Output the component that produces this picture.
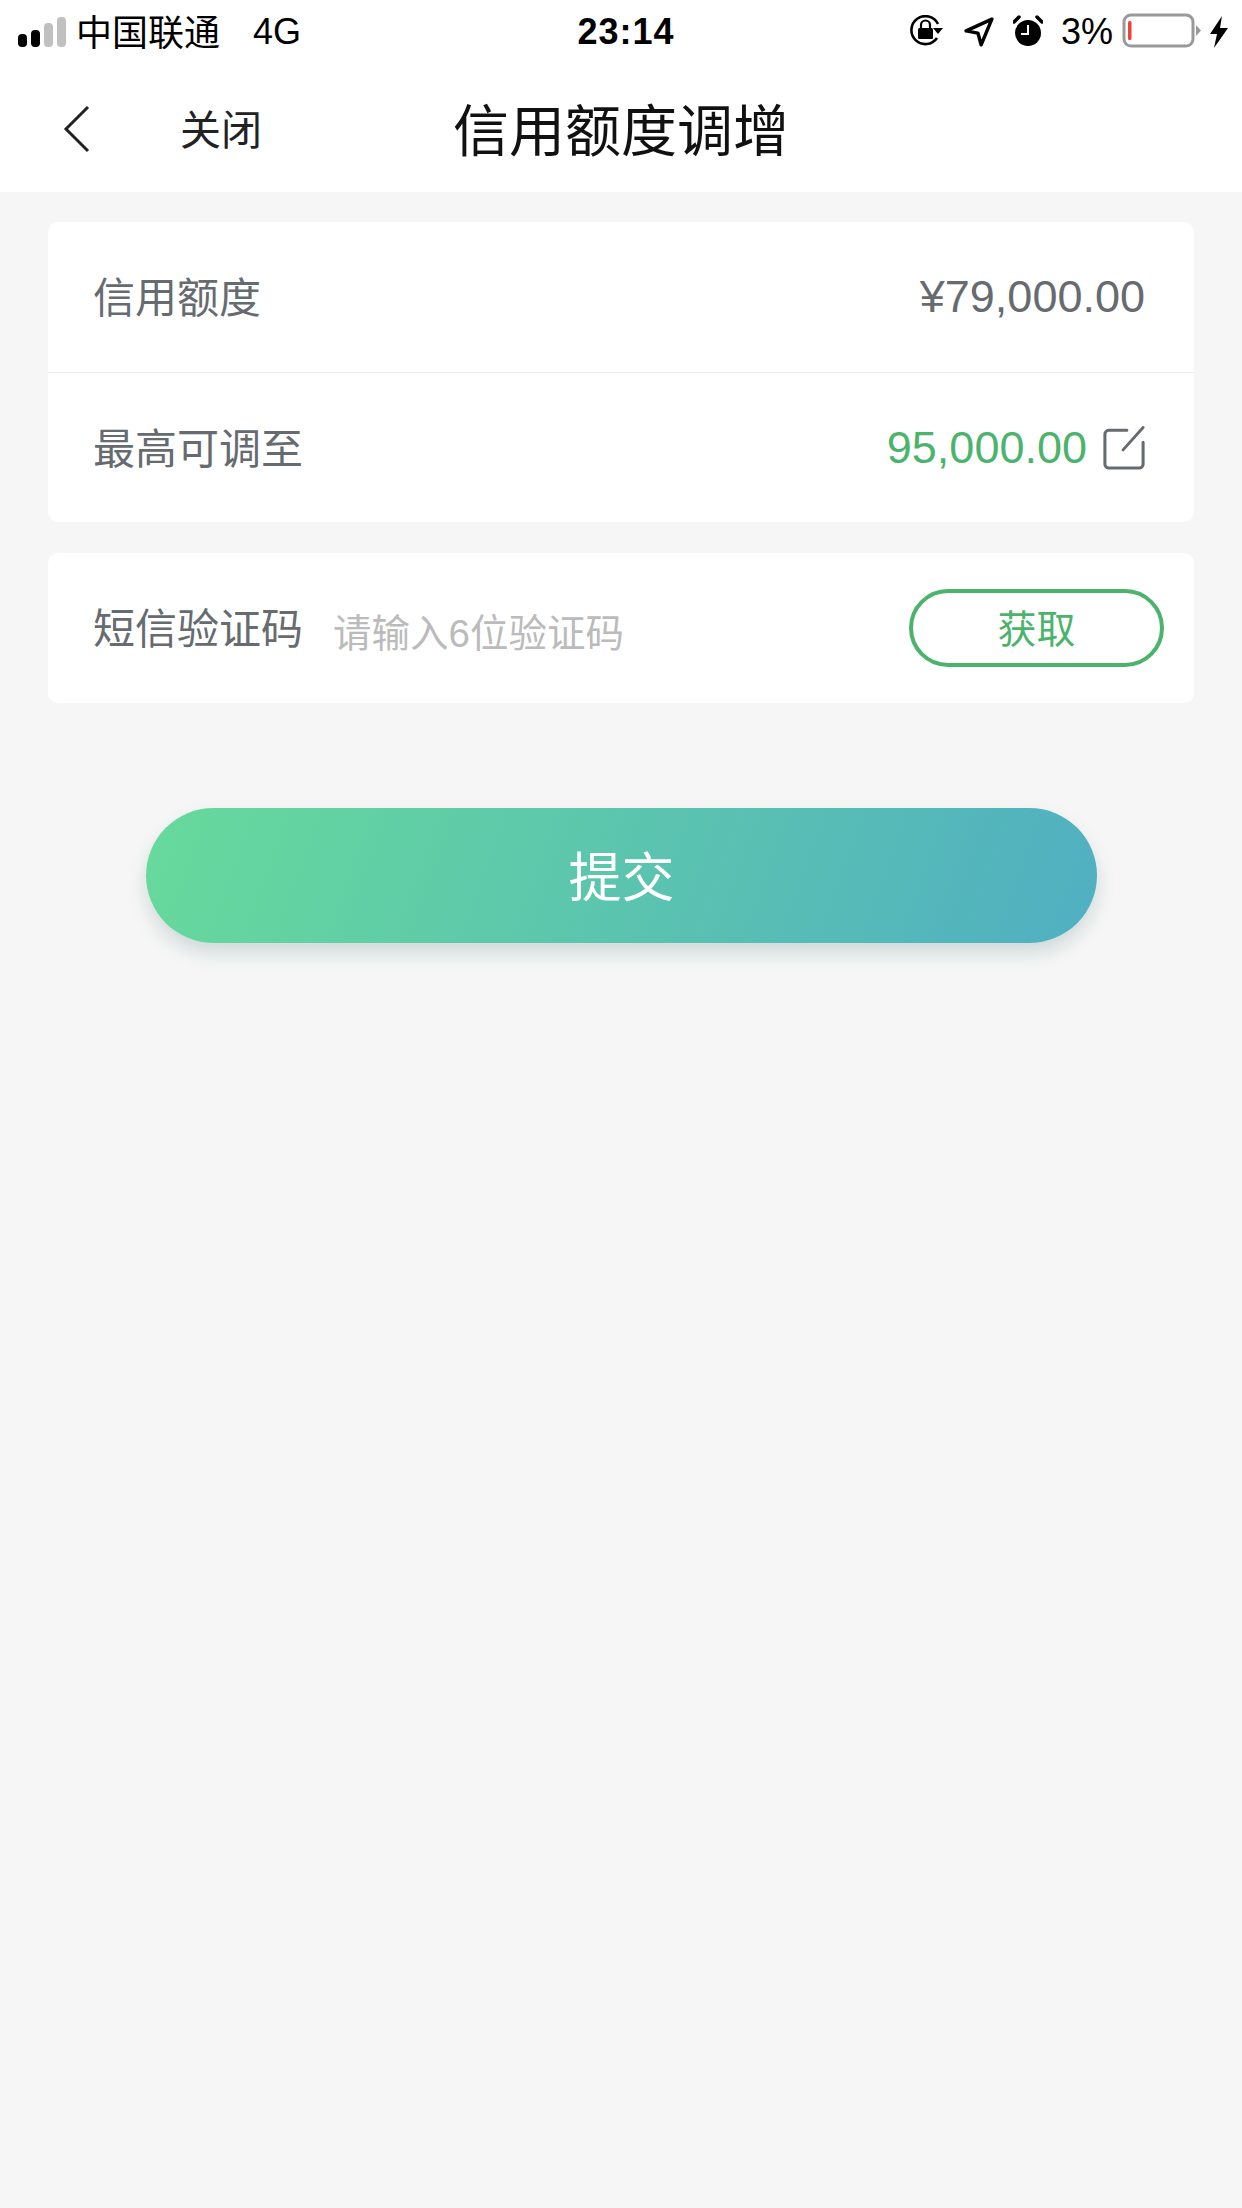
<div class="page">
  <header class="status">
    <div class="st-left">
      <svg class="signal" width="50" height="30" viewBox="0 0 50 30">
        <rect x="0" y="17" width="9" height="13" rx="4" fill="#000"/>
        <rect x="13" y="13" width="9" height="17" rx="4" fill="#000"/>
        <rect x="26" y="6" width="9" height="24" rx="4" fill="#c0c0c0"/>
        <rect x="39" y="0" width="9" height="30" rx="4" fill="#c0c0c0"/>
      </svg>
      <span class="carrier">中国联通</span>
      <span class="net">4G</span>
    </div>
    <div class="time">23:14</div>
    <div class="st-right">
      <svg class="lock" width="36" height="32" viewBox="0 0 36 32">
        <path d="M28 23A14 14 0 1 1 29 9" fill="none" stroke="#000" stroke-width="2.6"/>
        <path d="M24 13h10l-5 6z" fill="#000"/>
        <rect x="9" y="13" width="15" height="11" rx="1.5" fill="#000"/>
        <path d="M12 13V10a4.500 4.500 0 0 1 9 0v3" fill="none" stroke="#000" stroke-width="2.200"/>
      </svg>
      <svg class="loc" width="30" height="30" viewBox="0 0 28 28">
        <path d="M26 2L2 13l11 2 3 11z" fill="none" stroke="#000" stroke-width="3.200" stroke-linejoin="round"/>
      </svg>
      <svg class="alarm" width="30" height="32" viewBox="0 0 30 32">
        <circle cx="15" cy="18" r="13" fill="#000"/>
        <path d="M15 10v9H8" fill="none" stroke="#fff" stroke-width="2"/>
        <path d="M1 7l5-5M29 7l-5-5" stroke="#000" stroke-width="3.500" stroke-linecap="round"/>
      </svg>
      <span class="pct">3%</span>
      <svg class="batt" width="80" height="36" viewBox="0 0 80 36">
        <rect x="2" y="2" width="69" height="31" rx="7" fill="none" stroke="#999" stroke-width="3"/>
        <rect x="6" y="8" width="3.500" height="19" rx="1.500" fill="#ef4136"/>
        <path d="M74 12l5 5.500-5 5.500z" fill="#999"/>
      </svg>
      <svg class="bolt" width="20" height="32" viewBox="0 0 20 32">
        <path d="M13 0L1 18h7l-3 14L19 12h-8z" fill="#000"/>
      </svg>
    </div>
  </header>

  <nav class="bar">
    <svg class="back" width="28" height="48" viewBox="0 0 28 48">
      <path d="M25 2L3 24l22 22" fill="none" stroke="#222" stroke-width="3"/>
    </svg>
    <span class="close">关闭</span>
    <h1>信用额度调增</h1>
  </nav>

  <main>
    <section class="card">
      <div class="row">
        <span class="label">信用额度</span>
        <span class="amount">¥79,000.00</span>
      </div>
      <div class="row">
        <span class="label">最高可调至</span>
        <span class="right">
          <span class="amount green">95,000.00</span>
          <svg class="edit" width="42" height="44" viewBox="0 0 44 46">
            <path d="M25 4.500H6a4 4 0 0 0-4 4V40a4 4 0 0 0 4 4h32a4 4 0 0 0 4-4V17" fill="none" stroke="#666b70" stroke-width="3.200" stroke-linecap="round"/>
            <path d="M21 25L42 1.500" fill="none" stroke="#666b70" stroke-width="3" stroke-linecap="round"/>
          </svg>
        </span>
      </div>
    </section>

    <section class="card sms">
      <span class="label">短信验证码</span>
      <span class="placeholder">请输入6位验证码</span>
      <button class="get">获取</button>
    </section>

    <button class="submit">提交</button>
  </main>
</div>

<style>
  :global(body) {
    margin: 0;
    background: #f6f6f6;
  }
  .page {
    width: 1242px;
    min-height: 2208px;
    background: #f6f6f6;
    font-family: "Liberation Sans", "Noto Sans CJK SC", sans-serif;
  }
  .status {
    height: 64px;
    background: #fff;
    display: grid;
    grid-template-columns: 1fr auto 1fr;
    align-items: center;
    color: #000;
  }
  .st-left {
    display: flex;
    align-items: center;
    padding-left: 18px;
  }
  .signal {
    margin-right: 8px;
    overflow: visible;
  }
  .carrier {
    font-size: 36px;
    padding-bottom: 4px;
  }
  .net {
    font-size: 36px;
    margin-left: 33px;
  }
  .time {
    font-size: 36px;
    font-weight: 700;
    letter-spacing: 1px;
    margin-left: 10px;
  }
  .st-right {
    display: flex;
    align-items: center;
    justify-content: flex-end;
    padding-right: 13px;
  }
  .lock {
    margin-top: -2px;
  }
  .loc {
    margin-left: 19px;
  }
  .alarm {
    margin-left: 19px;
    margin-top: -3px;
  }
  .pct {
    font-size: 36px;
    margin-left: 18px;
  }
  .batt {
    margin-left: 9px;
    margin-top: -2px;
  }
  .bolt {
    margin-left: 7px;
  }
  .bar {
    height: 128px;
    background: #fff;
    display: flex;
    align-items: center;
    position: relative;
  }
  .back {
    margin-left: 63px;
    margin-top: 2px;
  }
  .close {
    font-size: 41px;
    color: #222;
    margin-left: 89px;
    padding-bottom: 2px;
  }
  h1 {
    position: absolute;
    left: 0;
    right: 0;
    top: 22px;
    margin: 0;
    text-align: center;
    font-size: 56px;
    font-weight: 400;
    color: #111;
  }
  main {
    padding: 30px 48px 0;
    display: flex;
    flex-direction: column;
  }
  .card {
    background: #fff;
    border-radius: 10px;
  }
  .row {
    height: 150px;
    box-sizing: border-box;
    display: flex;
    align-items: center;
    justify-content: space-between;
    padding: 0 49px 0 46px;
  }
  .row + .row {
    border-top: 1px solid #eeeeee;
  }
  .label {
    font-size: 42px;
    color: #666b70;
    margin-left: -1px;
    padding-bottom: 5px;
  }
  .amount {
    font-size: 45px;
    color: #666b70;
  }
  .green {
    color: #4cb36c;
  }
  .right {
    display: flex;
    align-items: center;
  }
  .edit {
    margin-left: 16px;
  }
  .sms {
    margin-top: 31px;
    height: 150px;
    display: flex;
    align-items: center;
    padding: 0 30px 0 46px;
  }
  .placeholder {
    font-size: 38.5px;
    color: #bbbbbb;
    margin-left: 30px;
    padding-top: 4px;
  }
  .get {
    margin-left: auto;
    width: 255px;
    height: 78px;
    border: 4px solid #4cb36c;
    border-radius: 39px;
    background: #fff;
    color: #4cb36c;
    font-size: 39px;
    font-family: inherit;
    padding: 0 0 4px;
  }
  .submit {
    align-self: flex-start;
    margin: 105px 0 0 98px;
    width: 951px;
    height: 135px;
    border: 0;
    border-radius: 68px;
    background: linear-gradient(110deg, #67da9b, #50afc2);
    box-shadow: 0 10px 18px rgba(90, 130, 130, 0.24);
    color: #fff;
    font-size: 53px;
    font-family: inherit;
    padding: 0 0 4px;
  }
</style>
